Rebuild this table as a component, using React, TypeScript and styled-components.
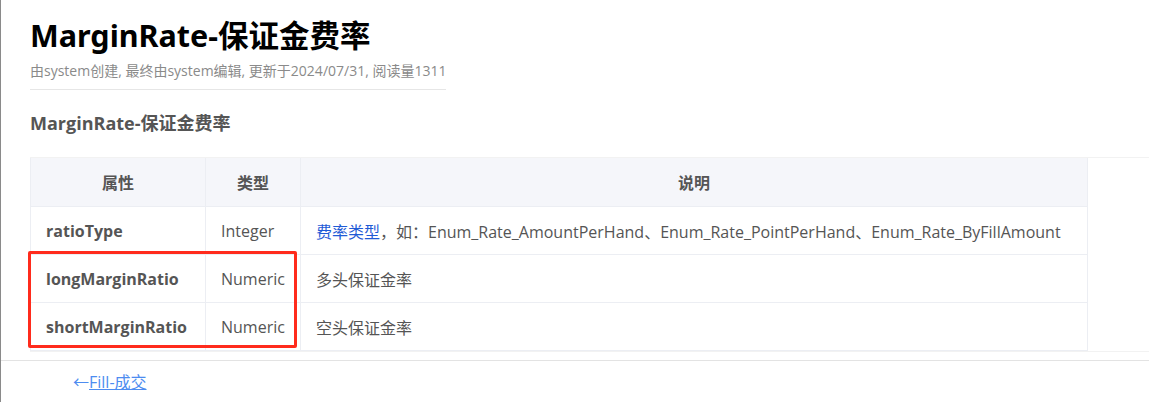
import React from "react";
import styled, { createGlobalStyle } from "styled-components";

const GlobalStyle = createGlobalStyle`
  html, body {
    margin: 0;
    padding: 0;
    background: #ffffff;
  }
  body {
    font-family: "Open Sans", "Noto Sans CJK SC", sans-serif;
    color: #555555;
  }
`;

const Page = styled.div`
  min-height: 402px;
  border-left: 1px solid #8a8a8a;
  box-sizing: border-box;
  overflow: hidden;
`;

const Article = styled.div`
  padding: 16px 0 0 29px;
`;

const Header = styled.div`
  display: inline-block;
  padding-bottom: 8px;
  border-bottom: 1px solid #e6e6e6;
`;

const Title = styled.h1`
  margin: 0;
  font-size: 30.5px;
  line-height: 38px;
  font-weight: 700;
  color: #000000;
  font-family: "Noto Sans", "Noto Sans CJK SC", sans-serif;
`;

const Meta = styled.div`
  margin-top: 7px;
  font-size: 14px;
  line-height: 20px;
  color: #8a8a8a;
`;

const SubTitle = styled.h2`
  margin: 20px 0 21px;
  font-size: 18px;
  line-height: 26px;
  font-weight: 700;
  color: #555555;
`;

const TableWrap = styled.div`
  position: relative;
  border-top: 1px solid #f2f2f2;
  border-bottom: 1px solid #f2f2f2;
`;

const Table = styled.table`
  border-collapse: collapse;
  width: 1058px;
  font-size: 16px;
  color: #555555;
`;

const HeadCell = styled.th`
  height: 48px;
  padding: 0 16px;
  background: #f5f6fa;
  border: 1px solid #eceef3;
  border-top: none;
  font-weight: 700;
  text-align: center;
  color: #555555;
`;

const Cell = styled.td<{ $bold?: boolean }>`
  height: 47px;
  padding: 0 15px;
  border: 1px solid #eceef3;
  font-weight: ${({ $bold }) => ($bold ? 700 : 400)};
  white-space: nowrap;
`;

const DocLink = styled.a`
  color: #1f5bd6;
  text-decoration: none;
`;

const Mark = styled.div`
  position: absolute;
  left: -2px;
  top: 93px;
  width: 269px;
  height: 97px;
  border: 3px solid #ff2b1c;
  border-radius: 2px;
  box-sizing: border-box;
  pointer-events: none;
`;

const Footer = styled.div`
  margin-top: 8px;
  border-top: 1px solid #e3e3e3;
  padding: 11px 0 0 72px;
  font-size: 16px;
  line-height: 20px;
`;

const Arrow = styled.span`
  color: #4d8cf0;
`;

const PrevLink = styled.a`
  color: #4d8cf0;
  text-decoration: underline;
`;

const rows = [
  { name: "longMarginRatio", type: "Numeric", desc: "多头保证金率" },
  { name: "shortMarginRatio", type: "Numeric", desc: "空头保证金率" },
];

const App: React.FC = () => {
  return (
    <>
      <GlobalStyle />
      <Page>
        <Article>
          <Header>
            <Title>MarginRate-保证金费率</Title>
            <Meta>
              由system创建, 最终由system编辑, 更新于2024/07/31, 阅读量1311
            </Meta>
          </Header>
          <SubTitle>MarginRate-保证金费率</SubTitle>
          <TableWrap>
            <Table>
              <colgroup>
                <col style={{ width: 175 }} />
                <col style={{ width: 95 }} />
                <col />
              </colgroup>
              <thead>
                <tr>
                  <HeadCell>属性</HeadCell>
                  <HeadCell>类型</HeadCell>
                  <HeadCell>说明</HeadCell>
                </tr>
              </thead>
              <tbody>
                <tr>
                  <Cell $bold>ratioType</Cell>
                  <Cell>Integer</Cell>
                  <Cell>
                    <DocLink href="#">费率类型</DocLink>
                    ，如：Enum_Rate_AmountPerHand、Enum_Rate_PointPerHand、Enum_Rate_ByFillAmount
                  </Cell>
                </tr>
                {rows.map((row) => (
                  <tr key={row.name}>
                    <Cell $bold>{row.name}</Cell>
                    <Cell>{row.type}</Cell>
                    <Cell>{row.desc}</Cell>
                  </tr>
                ))}
              </tbody>
            </Table>
            <Mark />
          </TableWrap>
        </Article>
        <Footer>
          <Arrow>←</Arrow>
          <PrevLink href="#">Fill-成交</PrevLink>
        </Footer>
      </Page>
    </>
  );
};

export default App;
